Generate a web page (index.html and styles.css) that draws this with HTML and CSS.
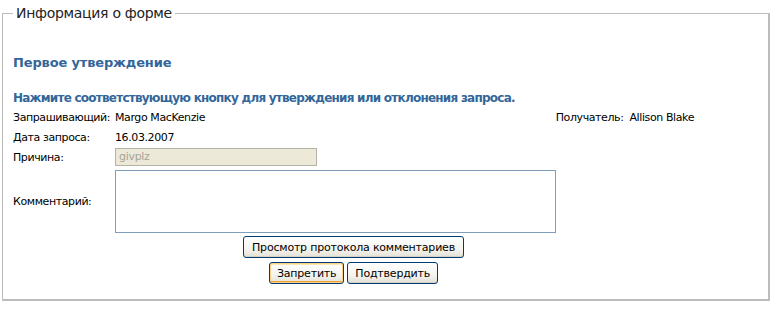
FILE: index.html
```html
<!DOCTYPE html>
<html lang="ru">
<head>
<meta charset="utf-8">
<link rel="stylesheet" href="styles.css">
</head>
<body>
<fieldset class="panel">
  <legend class="panel-title">Информация о форме</legend>
  <div class="form">
    <h2 class="form-title">Первое утверждение</h2>
    <p class="form-hint">Нажмите соответствующую кнопку для утверждения или отклонения запроса.</p>
    <div class="row row-split">
      <div class="pair"><span class="label">Запрашивающий:</span><span class="value">Margo MacKenzie</span></div>
      <div class="pair"><span class="label-inline">Получатель:</span><span class="value">Allison Blake</span></div>
    </div>
    <div class="row">
      <span class="label">Дата запроса:</span><span class="value">16.03.2007</span>
    </div>
    <div class="row">
      <span class="label">Причина:</span><div class="input-disabled">givplz</div>
    </div>
    <div class="row row-center">
      <span class="label">Комментарий:</span><div class="textarea"></div>
    </div>
    <div class="actions">
      <button class="btn btn-wide">Просмотр протокола комментариев</button>
    </div>
    <div class="actions actions-pair">
      <button class="btn btn-focus">Запретить</button>
      <button class="btn btn-confirm">Подтвердить</button>
    </div>
  </div>
</fieldset>
</body>
</html>
```
FILE: styles.css
```css
html, body {
  margin: 0;
  padding: 0;
  background: #fff;
}
body {
  font-family: "DejaVu Sans", Verdana, sans-serif;
  font-size: 11px;
  color: #000;
}
.panel {
  margin: 4px 0 0 2px;
  width: 768px;
  box-sizing: border-box;
  border: 1px solid #bcbcbc;
  border-width: 1px 2px 2px 1px;
  padding: 0 10px 13px 10px;
  height: 297px;
}
.panel-title {
  padding: 0 3px;
  font-size: 14px;
  line-height: 18px;
  color: #222;
  letter-spacing: -0.3px;
}
.form {
  width: 681px;
}
.form-title {
  margin: 32px 0 0 0;
  font-size: 13px;
  line-height: 18px;
  font-weight: bold;
  color: #336699;
  letter-spacing: -0.15px;
}
.form-hint {
  margin: 19px 0 0 0;
  font-size: 12px;
  line-height: 14px;
  font-weight: bold;
  color: #336699;
  letter-spacing: -0.76px;
}
.row {
  display: flex;
  align-items: center;
  min-height: 20px;
}
.row-split {
  justify-content: space-between;
  margin-top: 2px;
}
.pair {
  display: flex;
}
.label {
  width: 102px;
  flex: none;
  letter-spacing: -0.4px;
}
.label-inline {
  margin-right: 6px;
  letter-spacing: -0.4px;
}
.value {
  letter-spacing: -0.4px;
}
.input-disabled {
  width: 194px;
  height: 16px;
  border: 1px solid #b5b2a6;
  background: #ece9d8;
  color: #a6a499;
  padding: 0 3px;
  line-height: 16px;
  letter-spacing: -0.3px;
}
.row-center {
  margin-top: 3px;
}
.textarea {
  width: 439px;
  height: 61px;
  border: 1px solid #7f9db9;
  background: #fff;
}
.actions {
  display: flex;
  justify-content: center;
  gap: 3px;
  margin-top: 3px;
}
.actions-pair {
  margin-top: 4px;
}
.btn {
  font-family: "DejaVu Sans", Verdana, sans-serif;
  font-size: 11px;
  letter-spacing: -0.2px;
  height: 22px;
  padding: 0 6px;
  border: 1px solid #003c74;
  border-radius: 3px;
  background: linear-gradient(#ffffff, #f5f4ee 60%, #e3e1d6);
  color: #000;
  box-shadow: inset 0 -1px 0 #d6d0c5;
}
.btn-wide {
  padding: 0 8px;
}
.btn-focus {
  box-shadow: inset 0 0 0 1px #fbd28b, inset 0 -2px 0 #f0a033, inset 0 2px 0 #ffe7b4;
  padding: 0 7px;
}
.btn-confirm {
  padding: 0 7px;
}
```
